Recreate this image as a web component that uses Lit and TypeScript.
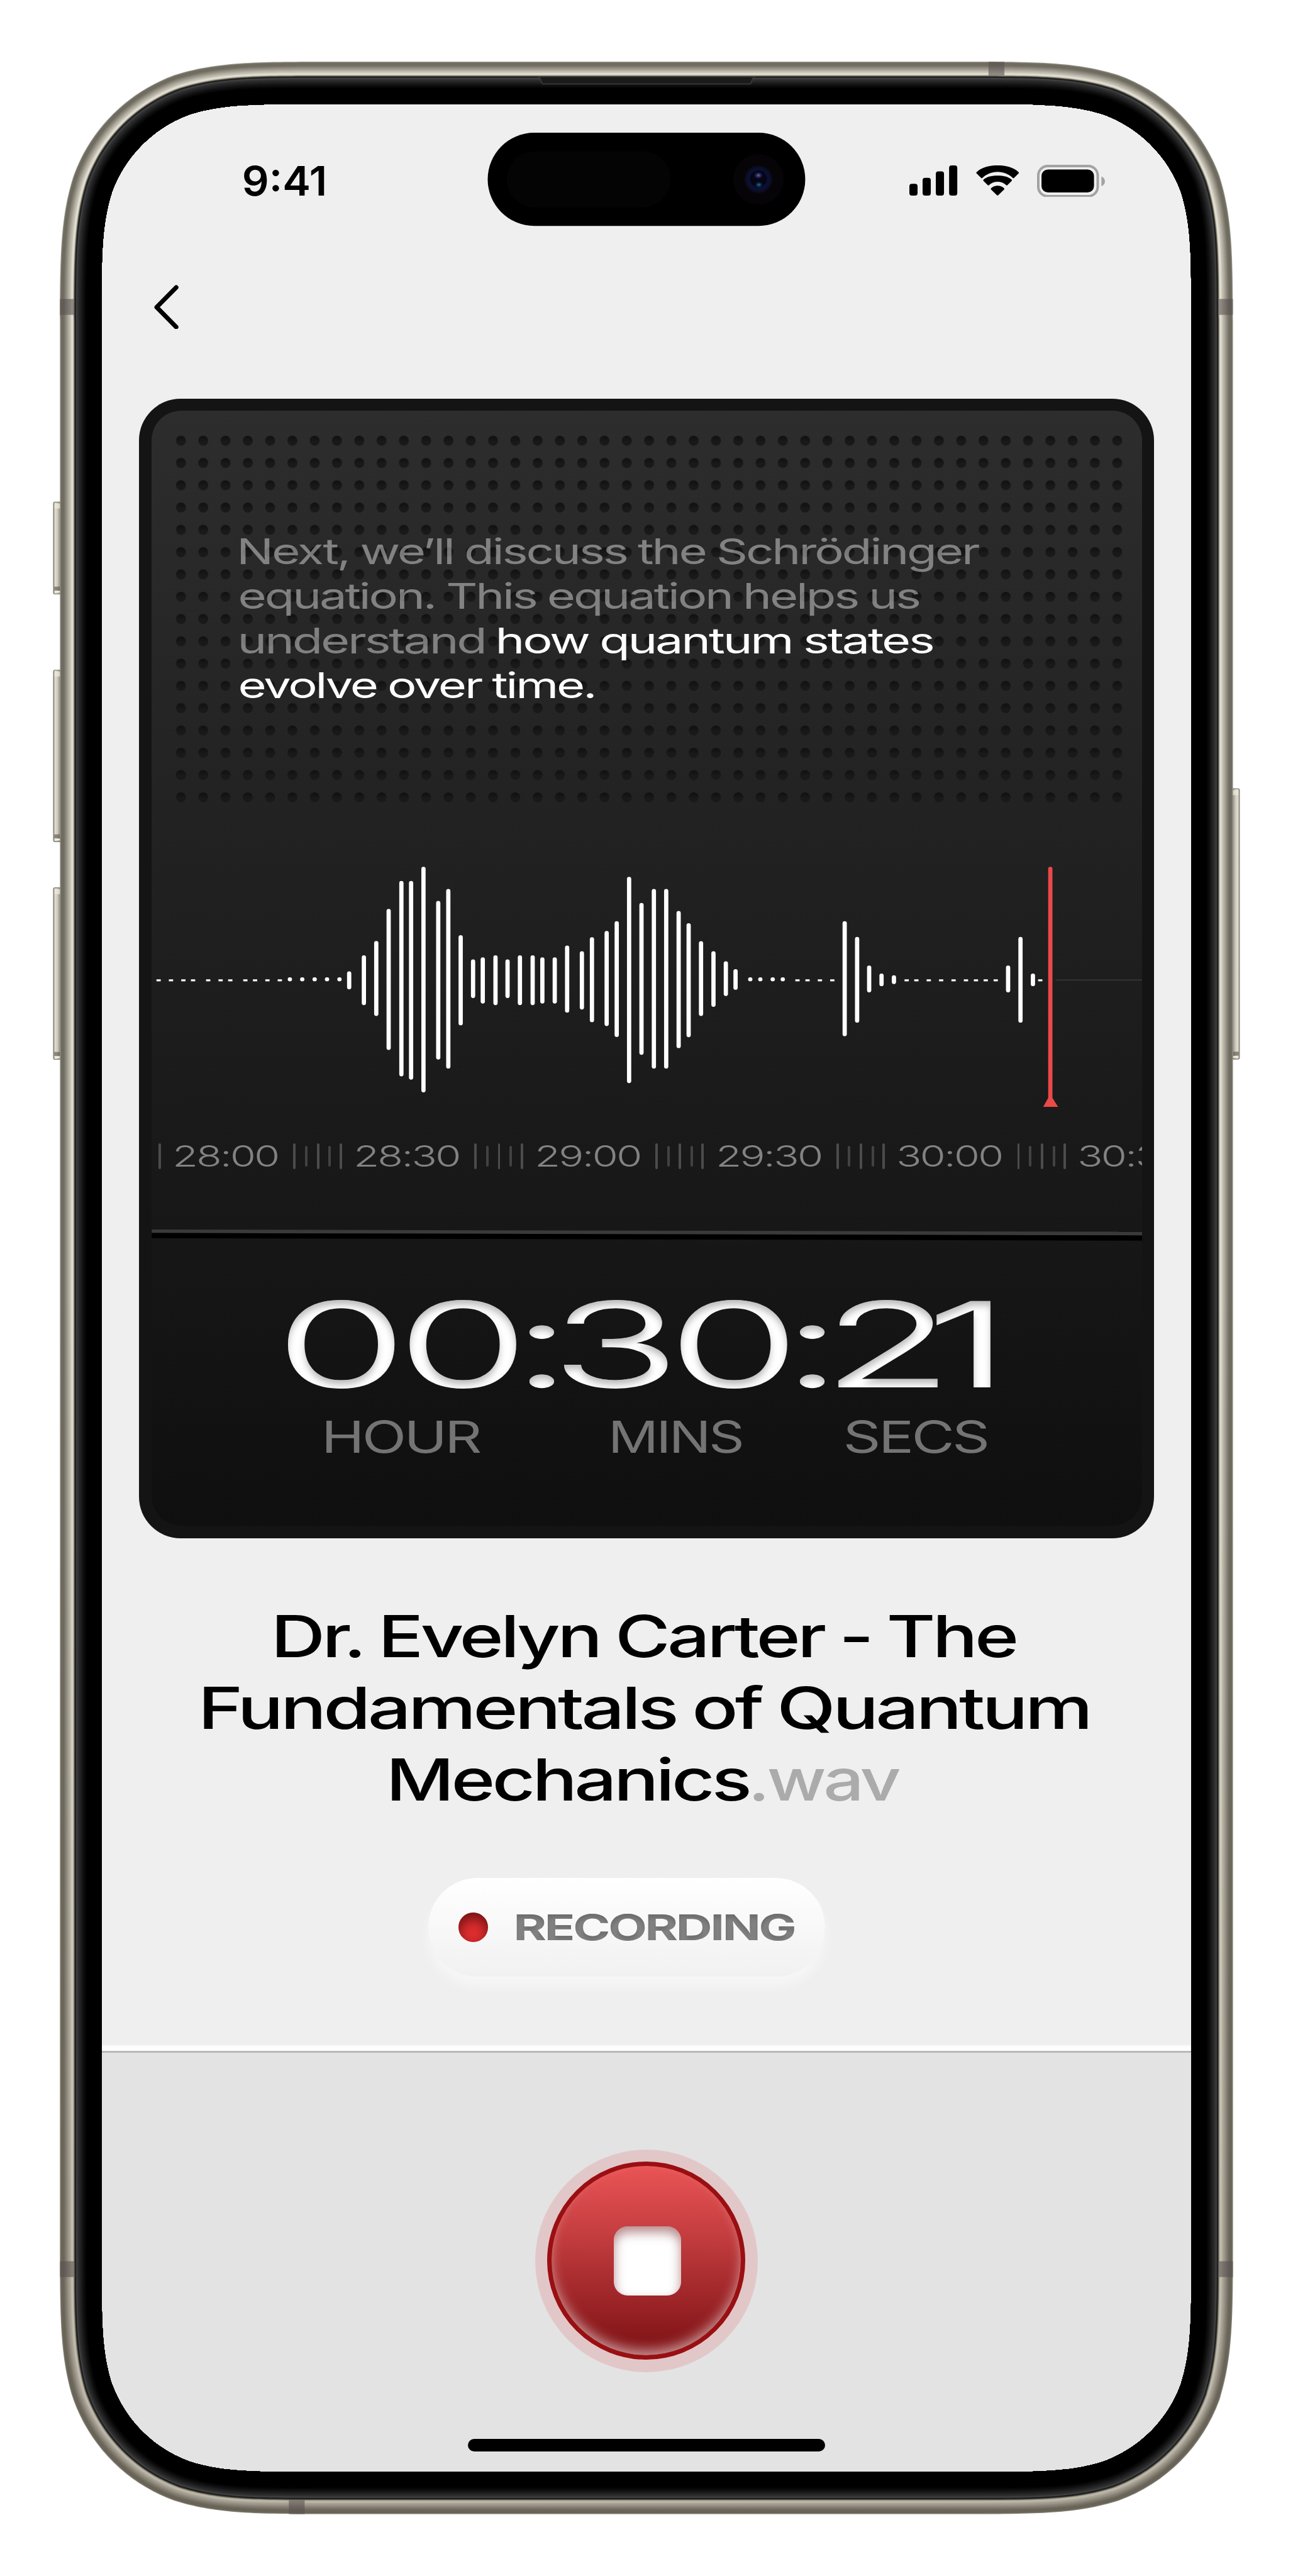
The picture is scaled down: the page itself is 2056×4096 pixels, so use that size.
import { LitElement, html, svg, css, unsafeCSS } from "lit";
import { customElement, property } from "lit/decorators.js";

const FONT = unsafeCSS(`Inter, "Liberation Sans", sans-serif`);

/** Line of text set to an exact ink width; the box is cap-height tall. */
@customElement("wide-text")
class WideText extends LitElement {
  @property() text = "";
  @property({ type: Number }) w = 100;
  @property({ type: Number }) cap = 50;
  @property({ type: Number }) bl = 0.1;
  @property({ type: Number }) br = 0.06;
  @property({ type: Number }) tight = 0.04;
  @property() fx = "";

  static styles = css`
    :host { display: block; flex: none; line-height: 0; }
    svg { display: block; overflow: visible; }
    text { font-family: ${FONT}; fill: currentColor; word-spacing: -0.02em; }
    .engraved { filter: url(#engrave); }
  `;

  render() {
    const size = this.cap / 0.727;
    const l = size * this.bl;
    const r = size * (this.br - this.tight);
    return html`<svg width=${this.w} height=${this.cap}>
      <defs>
        <filter id="engrave" x="-5%" y="-20%" width="110%" height="140%">
          <feOffset in="SourceAlpha" dy="7" result="o" />
          <feGaussianBlur in="o" stdDeviation="5" result="b" />
          <feComposite in="SourceAlpha" in2="b" operator="out" result="s" />
          <feFlood flood-color="#000" flood-opacity="0.34" />
          <feComposite in2="s" operator="in" result="c" />
          <feMerge><feMergeNode in="SourceGraphic" /><feMergeNode in="c" /></feMerge>
        </filter>
      </defs>
      <text class=${this.fx} x=${-l} y=${this.cap} font-size=${size} letter-spacing=${-size * this.tight}
        textLength=${this.w + l + r} lengthAdjust="spacingAndGlyphs">${this.text}</text>
    </svg>`;
  }
}

/** Continuous-curvature rounded rectangle path. */
function squircle(x: number, y: number, w: number, h: number, r: number): string {
  const a = 1.528665 * r, b = 1.08849296 * r, c = 0.86840694 * r;
  const d = 0.63149379 * r, e = 0.07491139 * r, f = 0.37282383 * r, g = 0.16905956 * r;
  const X = x + w, Y = y + h;
  return `M${x + a} ${y}H${X - a}C${X - b} ${y} ${X - c} ${y} ${X - d} ${y + e}` +
    `C${X - f} ${y + g} ${X - g} ${y + f} ${X - e} ${y + d}C${X} ${y + c} ${X} ${y + b} ${X} ${y + a}` +
    `V${Y - a}C${X} ${Y - b} ${X} ${Y - c} ${X - e} ${Y - d}` +
    `C${X - g} ${Y - f} ${X - f} ${Y - g} ${X - d} ${Y - e}C${X - c} ${Y} ${X - b} ${Y} ${X - a} ${Y}` +
    `H${x + a}C${x + b} ${Y} ${x + c} ${Y} ${x + d} ${Y - e}` +
    `C${x + f} ${Y - g} ${x + g} ${Y - f} ${x + e} ${Y - d}C${x} ${Y - c} ${x} ${Y - b} ${x} ${Y - a}` +
    `V${y + a}C${x} ${y + b} ${x} ${y + c} ${x + e} ${y + d}` +
    `C${x + g} ${y + f} ${x + f} ${y + g} ${x + d} ${y + e}C${x + c} ${y} ${x + b} ${y} ${x + a} ${y}Z`;
}

/** Colour stops across the frame, from the outer edge inwards. */
const RIM: [number, number[]][] = [
  [0, [150, 148, 138]], [2, [112, 108, 96]], [7, [112, 108, 96]], [12, [142, 138, 126]],
  [17, [176, 172, 160]], [21, [200, 196, 183]], [24, [228, 224, 211]], [26.5, [215, 211, 198]],
  [28, [120, 116, 103]], [29.5, [50, 47, 40]], [31, [22, 22, 22]], [33, [66, 68, 69]],
  [36, [48, 49, 50]], [41, [34, 34, 35]], [47, [16, 16, 17]], [54, [0, 0, 0]],
];

function rimColor(d: number): string {
  for (let i = 1; i < RIM.length; i++) {
    if (d <= RIM[i][0]) {
      const [d0, c0] = RIM[i - 1];
      const [d1, c1] = RIM[i];
      const t = (d - d0) / (d1 - d0);
      return `rgb(${c0.map((v, k) => Math.round(v + (c1[k] - v) * t)).join(",")})`;
    }
  }
  return "#000";
}

@customElement("phone-frame")
class PhoneFrame extends LitElement {
  static styles = css`
    :host { display: block; line-height: 0; }
    svg { display: block; }
  `;

  private button(x: number, y: number, h: number, right = false) {
    return svg`<g>
      <rect x=${x} y=${y} width="16" height=${h} rx="3" fill=${right ? "url(#btnR)" : "url(#btnL)"} stroke="#7d7970" stroke-width="1.5"/>
      <rect x=${x + 1.5} y=${y + h - 15} width="13" height="8" fill="#5f5b50" opacity=".65"/>
      <rect x=${x + 3} y=${y + h - 6} width="10" height="3" fill="#f3f0e4"/>
      <rect x=${x + 2} y=${y + 3} width="12" height="10" fill="#eeebe0" opacity=".7"/>
    </g>`;
  }

  render() {
    const at = (d: number) => squircle(121 + d, 124.5 + d, 2368 - 2 * d, 4950.5 - 2 * d, 365 - d);
    const hole = squircle(205, 210, 2200, 4780, 281);
    const rings: number[] = [];
    for (let d = 0; d <= 54; d += 1) rings.push(d);
    return html`<svg width="2610" height="5200" viewBox="0 0 2610 5200">
      <defs>
        <linearGradient id="btnL"><stop offset="0" stop-color="#8f8b80"/><stop offset=".2" stop-color="#e2ded0"/><stop offset=".5" stop-color="#cdc9bb"/><stop offset=".85" stop-color="#8f8b7f"/></linearGradient>
        <linearGradient id="btnR"><stop offset=".15" stop-color="#8f8b7f"/><stop offset=".5" stop-color="#cdc9bb"/><stop offset=".8" stop-color="#e2ded0"/><stop offset="1" stop-color="#8f8b80"/></linearGradient>
        <linearGradient id="shade" x1="0" y1="0" x2="0" y2="1"><stop offset=".5" stop-color="#575040" stop-opacity="0"/><stop offset="1" stop-color="#575040" stop-opacity=".28"/></linearGradient>
        <radialGradient id="lens"><stop offset="0" stop-color="#05061e"/><stop offset=".5" stop-color="#0a0d3c"/><stop offset=".75" stop-color="#0c1030"/><stop offset="1" stop-color="#080a18"/></radialGradient>
        <radialGradient id="glint"><stop offset="0" stop-color="#6b6fae"/><stop offset="1" stop-color="#14166a" stop-opacity="0"/></radialGradient>
        <radialGradient id="glint2"><stop offset="0" stop-color="#128a7a"/><stop offset="1" stop-color="#14166a" stop-opacity="0"/></radialGradient>
      </defs>
      ${this.button(108, 1013.6, 185.5)}${this.button(108, 1352.7, 346.5)}${this.button(108, 1792, 346.5)}
      ${this.button(2486, 1592, 546, true)}
      ${rings.map((d) => svg`<path fill-rule="evenodd" fill=${rimColor(d)} d=${at(d) + hole}/>`)}
      <path fill-rule="evenodd" fill="url(#shade)" d=${at(0) + at(28)}/>
      <g fill="#5a5250" opacity=".6">
        <rect x="121" y="603.5" width="28" height="32"/><rect x="2461" y="603.5" width="28" height="32"/>
        <rect x="121" y="4564.5" width="28" height="32"/><rect x="2461" y="4564.5" width="28" height="32"/>
        <rect x="1995.5" y="124.5" width="32" height="28"/><rect x="583" y="5047" width="32" height="28"/>
      </g>
      <path d="M1086 154.5Q1091 156 1092.500 164Q1093.500 169.500 1097 169.500H1513Q1516.500 169.500 1517.500 164Q1519 156 1524 154.500Z" fill="#1b1b1b" stroke="#3d3d3d" stroke-width="2"/>
      <rect x="984.5" y="268" width="641" height="188" rx="94" fill="#000"/>
      <rect x="1023" y="305.5" width="331" height="113" rx="56.500" fill="#040404"/>
      <circle cx="1531" cy="362" r="51" fill="#060407"/>
      <circle cx="1531" cy="362" r="28" fill="url(#lens)"/>
      <circle cx="1531" cy="361" r="17" fill="#050514"/>
      <ellipse cx="1531" cy="354" rx="10" ry="8" fill="url(#glint)"/>
      <ellipse cx="1532" cy="373" rx="9" ry="7" fill="url(#glint2)"/>
    </svg>`;
  }
}

@customElement("status-bar")
class StatusBar extends LitElement {
  static styles = css`
    :host { display: block; line-height: 0; }
    .bar { display: flex; align-items: center; justify-content: space-between; height: 310px; padding: 0 174px 0 288px; color: #000; }
    .icons { display: flex; align-items: center; gap: 37px; }
    wide-text { font-weight: 600; }
    svg { display: block; }
  `;

  render() {
    return html`<div class="bar">
      <wide-text text="9:41" .w=${162} .cap=${60} .bl=${0.05} .br=${0.07} .tight=${0}></wide-text>
      <div class="icons">
        <svg width="97" height="61" viewBox="0 0 97 61">
          <rect y="37" width="16.500" height="24" rx="5"/><rect x="26.700" y="25" width="16.500" height="36" rx="5"/>
          <rect x="53.400" y="12" width="16.500" height="49" rx="5"/><rect x="80.200" width="16.500" height="61" rx="5"/>
        </svg>
        <svg width="87" height="61" viewBox="0 0 87 61">
          <path d="M43.500 13C55 13 66 17.500 74.300 25.300Q75.600 26.500 76.900 25.200L85.900 16.200Q87.200 14.800 85.900 13.500C74.500 3.200 59.500 0 43.500 0S12.500 3.200 1.100 13.500Q-.2 14.800 1.100 16.200L10.100 25.200Q11.400 26.500 12.700 25.300C21 17.500 32 13 43.500 13Z"/>
          <path d="M43.500 33C50 33 56 35.400 60.800 39.700Q62.200 41 63.500 39.700L71.900 31.400Q73.300 30 71.800 28.600C64.300 21.900 54.500 20.500 43.500 20.500S22.700 21.900 15.200 28.600Q13.700 30 15.100 31.400L23.500 39.700Q24.800 41 26.200 39.700C31 35.400 37 33 43.500 33Z"/>
          <path d="M56.600 46Q58 47.500 56.500 49L45 60Q43.500 61.500 42 60L30.500 49Q29 47.500 30.400 46C34 42.900 38.500 41 43.500 41S53 42.900 56.600 46Z"/>
        </svg>
        <svg width="137" height="66" viewBox="0 0 137 66">
          <rect x="2.500" y="2.500" width="120" height="61" rx="19" fill="none" stroke="#a2a2a2" stroke-width="5"/>
          <rect x="9" y="9.500" width="106" height="46.500" rx="13"/>
          <path d="M130 23.500Q137 27 137 33.500T130 43.500Z" fill="#a2a2a2"/>
        </svg>
      </div>
    </div>`;
  }
}

/** Bars of the waveform: x centre, top, bottom. */
const BARS: [number, number, number][] = [
  [703.9, 1961.5, 1997.6], [733.6, 1929, 2029.5], [758.6, 1900, 2051.4], [783.6, 1835.4, 2120],
  [809.3, 1779, 2173.3], [828.9, 1779, 2180], [853.9, 1750.2, 2205.7], [883.7, 1819.2, 2139.3],
  [904, 1795.2, 2157.6], [929, 1888.3, 2070.3], [954, 1937.4, 2015.3], [973.6, 1933.2, 2026.3],
  [999.3, 1929, 2029.5], [1023.6, 1937.4, 2015.3], [1048.6, 1929, 2029.5], [1074.3, 1929, 2029.5],
  [1093.9, 1933.2, 2026.3], [1118.9, 1933.2, 2026.3], [1143.9, 1909.2, 2044.6], [1173.7, 1920.7, 2038.4],
  [1194, 1892.4, 2064], [1223.7, 1879.9, 2071.8], [1244, 1860, 2093.8], [1269, 1770.6, 2186.9],
  [1294, 1823.4, 2129.9], [1319, 1795.2, 2157.6], [1343.9, 1795.2, 2157.6], [1369, 1839.6, 2116.3],
  [1389.2, 1864.2, 2094.3], [1414.2, 1900.3, 2051.4], [1439.3, 1920.7, 2033.1], [1464.3, 1941, 2011.2],
  [1483.9, 1956.8, 1998.6], [1704.2, 1860, 2092.2], [1729.3, 1892, 2065], [1753.6, 1949.5, 2003.9],
  [1778.6, 1965.7, 1991.3], [1803.6, 1969.3, 1987.1], [2034.1, 1949.5, 2003.9], [2059.1, 1892, 2065],
  [2084.2, 1965.7, 1991.3],
];
const DOTS = [584.2, 609.2, 634.2, 659.2, 684.3, 1513.6, 1533.9, 1558.9, 1579.2];
const DASHES = [
  319.2, 344.2, 369.2, 388.8, 419.3, 444.3, 463.9, 494.3, 513.9, 538.9, 563.9,
  1608.9, 1629.2, 1654.2, 1679.2, 1829.3, 1848.9, 1873.9, 1898.9, 1924, 1949, 1969.2, 1988.9, 2009.1, 2099,
];
const MARKS = ["28:00", "28:30", "29:00", "29:30", "30:00", "30:30"];

@customElement("recorder-card")
class RecorderCard extends LitElement {
  static styles = css`
    :host { display: block; line-height: 0; }
    .card {
      box-sizing: border-box; width: 2049px; height: 2300px; padding: 24.5px;
      border-radius: 84px; background: #141414;
    }
    .face {
      display: flex; flex-direction: column; overflow: hidden; width: 2000px; height: 2251px;
      border-radius: 60px; background: linear-gradient(#2d2d2d, #0f0f0f);
    }
    .grille { display: grid; flex: none; margin: 37.5px 0 0 37px; width: 1935px; height: 765px; }
    .grille > * { grid-area: 1 / 1; }
    .caption { display: flex; flex-direction: column; gap: 37.8px; padding: 220px 0 0 143px; color: rgba(255, 255, 255, 0.42); font-weight: 400; }
    .row { display: flex; gap: 29px; }
    .live { color: #fff; }
    .wave { margin-top: 117.5px; flex: none; }
    .ruler { display: flex; align-items: center; margin-top: 73px; padding-left: 14.500px; height: 51px; color: #828282; font-weight: 300; }
    .segment { display: flex; align-items: center; flex: none; width: 365.4px; }
    .tick { flex: none; width: 5px; height: 51px; border-radius: 3px; background: #4c4c4c; }
    .tick.short { height: 41px; background: #424242; }
    .tick + wide-text { margin-left: 27px; }
    wide-text + .tick { margin-left: 31px; }
    .tick + .tick { margin-left: 18.8px; }
    .divider { margin-top: 123px; flex: none; }
    .clock { margin-top: 122px; flex: none; overflow: visible; }
    .clock text { font-family: ${FONT}; font-size: 236px; font-weight: 300; fill: #fff; stroke: #fff; stroke-width: 2.5px; }
    .units { display: flex; margin-top: 69px; padding-left: 352px; color: #747474; }
    .units .mins { margin-left: 269px; }
    .units .secs { margin-left: 209px; }
    svg { display: block; }
  `;

  render() {
    return html`<div class="card"><div class="face">
      <div class="grille">
        <svg width="1935" height="765">
          <defs>
            <linearGradient id="hole" x1="0" y1="0" x2="0" y2="1"><stop offset="0" stop-color="#101010"/><stop offset=".6" stop-color="#191919"/></linearGradient>
            <pattern id="holes" width="45" height="45" patternUnits="userSpaceOnUse"><circle cx="22.500" cy="22.500" r="10.100" fill="url(#hole)"/></pattern>
          </defs>
          <rect width="1935" height="765" fill="url(#holes)"/>
        </svg>
        <div class="caption">
          <wide-text text="Next, we’ll discuss the Schrödinger" .w=${1491} .cap=${52.2} .br=${0.02}></wide-text>
          <wide-text text="equation. This equation helps us" .w=${1371} .cap=${52.2} .bl=${0.06} .br=${0.04}></wide-text>
          <div class="row">
            <wide-text text="understand" .w=${491} .cap=${52.2} .bl=${0.08} .br=${0.09}></wide-text>
            <wide-text class="live" text="how quantum states" .w=${878} .cap=${52.2} .bl=${0.08} .br=${0.04}></wide-text>
          </div>
          <wide-text class="live" text="evolve over time." .w=${713} .cap=${52.2} .bl=${0.06} .br=${0.09}></wide-text>
        </div>
      </div>
      <svg class="wave" width="2000" height="486" viewBox="305 1750 2000 486">
        <rect x="2130" y="1978" width="175" height="2" fill="#3a3a3a"/>
        <g fill="#fff">
          ${BARS.map(([x, t, b]) => svg`<rect x=${x - 4.3} y=${t} width="8.600" height=${b - t} rx="4.300"/>`)}
          ${DOTS.map((x) => svg`<rect x=${x - 4.3} y="1973.500" width="8.600" height="8" rx="4"/>`)}
          ${DASHES.map((x) => svg`<rect x=${x - 4.3} y="1977.500" width="8.600" height="4"/>`)}
        </g>
        <path d="M2115 1754.500a4.300 4.300 0 0 1 8.600 0V2217L2135 2235H2105L2115 2217Z" fill="#ea4a49"/>
      </svg>
      <div class="ruler">
        ${MARKS.map((m) => html`<div class="segment">
          <i class="tick"></i>
          <wide-text text=${m} .w=${209} .cap=${43.5} .bl=${0.06} .br=${0.06}></wide-text>
          <i class="tick"></i><i class="tick short"></i><i class="tick"></i><i class="tick short"></i>
        </div>`)}
      </div>
      <svg class="divider" width="2000" height="23" viewBox="0 0 2000 23">
        <path d="M0 0L2000 4.500V12L0 7Z" fill="#3a3a3a"/>
        <path d="M0 7L2000 12V22.500L0 17.500Z" fill="#000"/>
      </svg>
      <svg class="clock" width="2000" height="171.500">
        <defs>
          <filter id="dip" x="-2%" y="-20%" width="104%" height="140%">
            <feOffset in="SourceAlpha" dy="10" result="o"/>
            <feGaussianBlur in="o" stdDeviation="7" result="b"/>
            <feComposite in="SourceAlpha" in2="b" operator="out" result="s"/>
            <feFlood flood-color="#000" flood-opacity=".5"/>
            <feComposite in2="s" operator="in" result="c"/>
            <feMerge><feMergeNode in="SourceGraphic"/><feMergeNode in="c"/></feMerge>
          </filter>
        </defs>
        <g filter="url(#dip)"><text transform="scale(1.82 1)" y="171.500"
          x="137.500 272.500 399.500 443 573 699.500 744 859">00:30:21</text></g>
      </svg>
      <div class="units">
        <wide-text text="HOUR" .w=${310} .cap=${64.3} .bl=${0.1} .br=${0.05}></wide-text>
        <wide-text class="mins" text="MINS" .w=${261} .cap=${64.3} .bl=${0.1} .br=${0.05}></wide-text>
        <wide-text class="secs" text="SECS" .w=${286.600} .cap=${64.3} .bl=${0.05} .br=${0.05}></wide-text>
      </div>
    </div></div>`;
  }
}

@customElement("app-root")
class AppRoot extends LitElement {
  static styles = css`
    :host { display: block; width: 2056px; height: 4096px; overflow: hidden; background: #fff; }
    .stage { zoom: 0.7877; position: relative; width: 2610px; height: 5200px; padding: 210px 205px; box-sizing: border-box; font-family: ${FONT}; }
    phone-frame { position: absolute; left: 0; top: 0; pointer-events: none; }
    .screen { display: flex; flex-direction: column; width: 2200px; height: 4780px; overflow: hidden; border-radius: 230px; background: #efefef; }
    .nav { display: flex; align-items: center; flex: none; height: 199px; padding-left: 102px; }
    .nav svg { display: block; }
    recorder-card { margin: 86px 0 0 76px; }
    .title { display: flex; flex-direction: column; align-items: center; gap: 59.700px; margin: 155px 4px 0 0; font-weight: 500; color: #000; }
    .row { display: flex; gap: 8px; }
    .ext { color: #ababab; }
    .pill {
      display: flex; align-items: center; align-self: center; box-sizing: border-box; flex: none;
      width: 800px; height: 200px; margin: 155px 80px 0 0; padding-left: 60px; gap: 57px;
      border-radius: 100px; background: linear-gradient(#fff, #f1f1f1);
      box-shadow: 0 18px 24px rgba(255, 255, 255, 0.5); color: #838383; font-weight: 700;
    }
    .led { width: 60px; height: 60px; border-radius: 50%; background: #e02d2f; box-shadow: inset 0 12px 24px rgba(40, 0, 0, 0.6); }
    .panel {
      display: flex; flex-direction: column; align-items: center; flex: none; box-sizing: border-box;
      height: 850px; margin-top: auto; padding-top: 195px; border-top: 5px solid #b9b9b9;
      background: #e3e3e3; box-shadow: 0 -11px 3px #fdfdfd;
    }
    .halo { display: flex; padding: 25px; border-radius: 50%; background: #e2c7c9; }
    .stop {
      display: flex; align-items: center; justify-content: center; box-sizing: border-box; width: 400px; height: 400px;
      border: 10px solid #9a0f12; border-radius: 50%; background: linear-gradient(#ea5456, #c23c3e 38%, #851619 92%);
      box-shadow: inset 0 -14px 24px -4px rgba(255, 255, 255, 0.55);
    }
    .square { width: 135px; height: 140px; margin-left: 4px; border-radius: 28px; background: #fff; box-shadow: inset 0 12px 22px rgba(110, 20, 24, 0.5); }
    .home { width: 720px; height: 25px; margin: 135px 0 0; border-radius: 13px; background: #000; }
  `;

  render() {
    return html`<div class="stage">
      <div class="screen">
        <status-bar></status-bar>
        <div class="nav">
          <svg width="54" height="90" viewBox="0 0 54 90"><path d="M48.500 5L9 45L48.500 85" fill="none" stroke="#000" stroke-width="9" stroke-linecap="round" stroke-linejoin="round"/></svg>
        </div>
        <recorder-card></recorder-card>
        <div class="title">
          <wide-text text="Dr. Evelyn Carter - The" .w=${1490} .cap=${85.3} .bl=${0.1} .br=${0.06}></wide-text>
          <wide-text text="Fundamentals of Quantum" .w=${1783} .cap=${85.3} .bl=${0.1} .br=${0.09}></wide-text>
          <div class="row">
            <wide-text text="Mechanics" .w=${720} .cap=${85.3} .bl=${0.1} .br=${0.05}></wide-text>
            <wide-text class="ext" text=".wav" .w=${296} .cap=${85.3} .bl=${0.08} .br=${0.02}></wide-text>
          </div>
        </div>
        <div class="pill"><i class="led"></i>
          <wide-text fx="engraved" text="RECORDING" .w=${560} .cap=${52} .bl=${0.08} .br=${0.06}></wide-text>
        </div>
        <div class="panel">
          <div class="halo"><div class="stop"><i class="square"></i></div></div>
          <div class="home"></div>
        </div>
      </div>
      <phone-frame></phone-frame>
    </div>`;
  }
}
